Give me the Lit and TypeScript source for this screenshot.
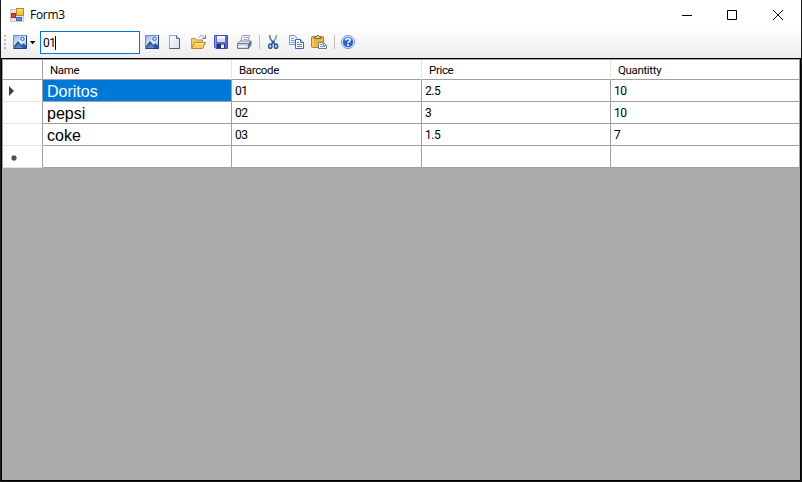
import { LitElement, html, svg, css } from "lit";
import { customElement } from "lit/decorators.js";

const picture = svg`
  <defs><linearGradient id="sky" x2="1" y2="1"><stop stop-color="#8fb2ea"/><stop offset=".55" stop-color="#e2efff"/><stop offset="1" stop-color="#7fa6dd"/></linearGradient></defs>
  <rect x="1.5" y="1.5" width="13" height="13" fill="url(#sky)" stroke="#6f92cd"/>
  <circle cx="10.5" cy="4.8" r="1.7" fill="#dceaff" stroke="#36599c"/>
  <path d="M2 12 6 7l3.500 4 2-1.800L14 11.500V14H2z" fill="#2e579f"/>
  <path d="M2 14l4.500-4L11 14z" fill="#5d86c3"/>
  <path d="M1.500 14.500h13v-13" fill="none" stroke="#23417c"/>`;

const icons = {
  picture,
  page: svg`
    <defs><linearGradient id="sheet" x2="1" y2="1"><stop stop-color="#fff"/><stop offset="1" stop-color="#cfdef2"/></linearGradient></defs>
    <path d="M2.500 1.500h7l3 3v10h-10z" fill="url(#sheet)" stroke="#9aa9bd"/>
    <path d="M9.500 1.500v3h3" fill="#cbd8e9" stroke="#516680"/>
    <path d="M12.500 4.500v10h-10" fill="none" stroke="#4a5d76"/>`,
  open: svg`
    <path d="M1.500 14V4.500h4l1 1.500h6v3" fill="#f3cd6c" stroke="#c9973a"/>
    <path d="M1.500 14.500 4.500 8.500h11L12.500 14.500z" fill="#fbcf62" stroke="#bd8420"/>
    <path d="M4.800 9.500h9" stroke="#fff0b5"/>
    <path d="M9 3.500C10.500.8 13 1 14.500 4" fill="none" stroke="#7b98bb"/>
    <path d="M12 4.500h3.500V1" fill="none" stroke="#6787ae"/>`,
  save: svg`
    <path d="M1.500 1.500h13v13H3L1.500 13z" fill="#5967ce" stroke="#444ea8"/>
    <rect x="4" y="2" width="8" height="6" fill="#f4f7ff"/>
    <path d="M4 4.500h8v3.500H4z" fill="#d3ddf5"/>
    <rect x="4" y="10" width="8" height="4.500" fill="#27327f"/>
    <rect x="8" y="10.500" width="3" height="3.500" fill="#e7ebf7"/>
    <path d="M2.500 2v11" stroke="#8c9af0"/>`,
  print: svg`
    <path d="M4.500 7.500 6.500 1.500h7L12 7.500z" fill="#fff" stroke="#8ba0b8"/>
    <path d="M7.500 3.500h4.500M7 5.500h4.500" stroke="#a5b6ca"/>
    <path d="M1.500 9.500 4 7h11l-2.500 3z" fill="#e3e9f2" stroke="#7b8ba3"/>
    <path d="M1.500 9.500h11v5h-11z" fill="#cbd5e2" stroke="#687b96"/>
    <path d="m12.500 10 2.500-3v4l-2.500 3.500z" fill="#7788a0" stroke="#5b6c86"/>
    <path d="M3 12.500h7" stroke="#fff"/>`,
  cut: svg`
    <path d="m4.500 1 1 4 3.500 5" fill="none" stroke="#66809c" stroke-width="1.700"/>
    <path d="m11.500 1-1 4L7 10" fill="none" stroke="#8da3b8" stroke-width="1.700"/>
    <path d="m7 7 3 3M9.500 7 6.500 10" stroke="#35588f" stroke-width="1.500"/>
    <ellipse cx="5.300" cy="12.200" rx="1.600" ry="2.100" fill="none" stroke="#2b57ae" stroke-width="1.600"/>
    <ellipse cx="11" cy="12.200" rx="1.600" ry="2.100" fill="none" stroke="#2b57ae" stroke-width="1.600"/>`,
  copy: svg`
    <path d="M1.500 1.500h5l3 3v6h-8z" fill="#e6f0ff" stroke="#7897cb"/>
    <path d="M3 4.500h3M3 6.500h4M3 8.500h4" stroke="#80a2d8"/>
    <path d="M7.500 5.500h5l3 3v6h-8z" fill="#fff" stroke="#3e64ae"/>
    <path d="M12.500 5.500v3h3" fill="#c4d6f2" stroke="#3e64ae"/>
    <path d="M9 8.500h2M9 10.500h5M9 12.500h5" stroke="#5b84c7"/>`,
  paste: svg`
    <rect x=".500" y="2.500" width="12" height="11" rx="1" fill="#f0b043" stroke="#b97f2a"/>
    <path d="M2 4.500v8" stroke="#ffdc8b"/>
    <path d="M3.500 4.500V3H5l1-1.500h1.500L8.500 3H10v1.500z" fill="#e6d8ab" stroke="#7b6338"/>
    <path d="M7.500 8.500h5l3 3v3h-8z" fill="#f5f8fd" stroke="#687b98"/>
    <path d="M12.500 8.500v3h3M9 10.500h3M9 12.500h5" fill="none" stroke="#8297b6"/>`,
  help: svg`
    <circle cx="8" cy="8" r="6.500" fill="#f2f7ff" stroke="#6f8ed2"/>
    <circle cx="8" cy="8" r="5.200" fill="#2665d4"/>
    <path d="M3.500 7A4.600 4.600 0 0 1 12.500 7C10 5 6 5 3.500 7z" fill="#4f88e8"/>
    <path d="M5.900 6.400C6 3.800 10.200 3.900 10.100 6.200 10 7.700 8 7.700 8 9.300" fill="none" stroke="#fff" stroke-width="1.600"/>
    <rect x="7.100" y="10.200" width="1.800" height="1.800" fill="#fff"/>`,
};

type IconName = keyof typeof icons;

const columns = ["Name", "Barcode", "Price", "Quantitty"];
const rows = [
  ["Doritos", "01", "2.5", "10"],
  ["pepsi", "02", "3", "10"],
  ["coke", "03", "1.5", "7"],
  ["", "", "", ""],
];

@customElement("app-root")
export class AppRoot extends LitElement {
  static styles = css`
    :host {
      display: flex;
      flex-direction: column;
      box-sizing: border-box;
      width: 802px;
      height: 482px;
      overflow: hidden;
      background: #fff;
      border: solid #1b1b1e;
      border-width: 0 1px 1px;
      font: 12px/14px Roboto, "Liberation Sans", sans-serif;
      color: #000;
    }
    svg { display: block; flex: none; }
    .title {
      flex: none;
      height: 30px;
      display: flex;
      align-items: center;
      padding: 0 17px 0 9px;
      box-sizing: border-box;
    }
    .caption {
      margin: -1px 0 0 5px;
      flex: 1;
      font: 12px/16px "Open Sans", sans-serif;
      letter-spacing: -0.3px;
    }
    .controls { display: flex; margin-top: -1px; }
    .controls svg { margin-left: 33px; }
    .controls .close { margin-left: 34px; }
    .tools {
      flex: none;
      height: 28px;
      box-sizing: border-box;
      display: flex;
      align-items: center;
      padding: 0 0 4px 3px;
      background: linear-gradient(#fdfdfd, #ededed);
    }
    .grip { margin: 0 6px 0 0; }
    .drop { margin: 2px 4px 0 1px; }
    .entry {
      width: 100px;
      height: 23px;
      box-sizing: border-box;
      border: 1px solid #0078d7;
      background: #fff;
      display: flex;
      align-items: center;
      padding-left: 2px;
      margin: 1px 4px 0 0;
    }
    .num { letter-spacing: -0.5px; width: 12px; }
    .caret { width: 1px; height: 14px; background: #000; }
    .group { display: flex; gap: 7px; }
    .sep { width: 1px; height: 14px; background: #bdbdbd; margin: 0 5px 0 7px; }
    .sep.last { margin: 0 5px 0 7px; }
    .grid {
      flex: 1;
      box-sizing: border-box;
      border: 1px solid #000;
      background: #ababab;
    }
    .table {
      display: grid;
      grid-template-columns: 40px 189px 190px 189px 189px;
      border: solid #a0a0a0;
      border-width: 1px 0 0 1px;
    }
    .cell {
      height: 22px;
      box-sizing: border-box;
      background: #fff;
      border: solid #a0a0a0;
      border-width: 0 1px 1px 0;
      padding: 4px 0 0 3px;
      letter-spacing: -0.45px;
      white-space: nowrap;
    }
    .head {
      height: 20px;
      padding: 3px 0 0 7px;
      border-right-color: #e4e4e4;
      font-size: 11.500px;
      letter-spacing: -0.35px;
    }
    .head.first, .head.end { border-right-color: #a0a0a0; }
    .rowhead {
      padding: 5px 0 0 2px;
      border-bottom-color: #e2e2e2;
    }
    .rowhead:last-of-type { border-bottom-color: #a0a0a0; }
    .name {
      padding: 3px 0 0 4px;
      font: 16px/18px "Liberation Sans", Arial, sans-serif;
      letter-spacing: 0;
    }
    .selected { background: #0078d7; color: #fff; }
  `;

  icon(name: IconName) {
    return html`<svg width="16" height="16" viewBox="0 0 16 16">${icons[name]}</svg>`;
  }

  marker(index: number) {
    if (index === 0)
      return html`<svg width="12" height="12"><path d="M4 1v10l5-5z" fill="#404040" /></svg>`;
    if (index === rows.length - 1)
      return html`<svg width="18" height="14"><path d="M9 4v6M6 7h6M7 5l4 4M11 5 7 9" stroke="#404040" stroke-width="1.100" /></svg>`;
    return null;
  }

  render() {
    return html`
      <div class="title">
        <svg width="15" height="15" viewBox="0 0 15 15">
          <rect x=".5" y="1.500" width="13" height="12" fill="#e4e4e4" stroke="#c9c9c9" />
          <rect x="6.500" y=".5" width="7" height="7" fill="#f5c343" stroke="#b88b1d" />
          <path d="M7 2h6" stroke="#ffe7a0" />
          <rect x="1.500" y="5.500" width="4" height="4" fill="#d84b32" stroke="#a52b1c" />
          <rect x="6.500" y="9.500" width="5" height="3" fill="#5d91e3" stroke="#3e69b7" />
        </svg>
        <span class="caption">Form3</span>
        <div class="controls">
          <svg width="12" height="12"><path d="M1 6.500h10" stroke="#000" /></svg>
          <svg width="12" height="12"><path d="M1.500 1.500h9v9h-9z" fill="none" stroke="#000" /></svg>
          <svg class="close" width="12" height="12"><path d="m1 1 10 10M11 1 1 11" stroke="#000" /></svg>
        </div>
      </div>
      <div class="tools">
        <svg class="grip" width="2" height="16"><path d="M1 1v14" stroke="#b9b9b9" stroke-width="2" stroke-dasharray="2" /></svg>
        ${this.icon("picture")}
        <svg class="drop" width="7" height="4"><path d="M1 0h5.500L3.700 3.200z" /></svg>
        <div class="entry"><span class="num">01</span><span class="caret"></span></div>
        <div class="group">
          ${(["picture", "page", "open", "save", "print"] as IconName[]).map((n) => this.icon(n))}
        </div>
        <div class="sep"></div>
        <div class="group">${(["cut", "copy", "paste"] as IconName[]).map((n) => this.icon(n))}</div>
        <div class="sep last"></div>
        ${this.icon("help")}
      </div>
      <div class="grid">
        <div class="table">
          <div class="cell head first"></div>
          ${columns.map((c, i) => html`<div class="cell head ${i === 3 ? "end" : ""}">${c}</div>`)}
          ${rows.map(
            (row, r) => html`
              <div class="cell rowhead">${this.marker(r)}</div>
              ${row.map(
                (value, c) =>
                  html`<div class="cell ${c === 0 ? "name" : ""} ${r === 0 && c === 0 ? "selected" : ""}">${value}</div>`
              )}
            `
          )}
        </div>
      </div>
    `;
  }
}
